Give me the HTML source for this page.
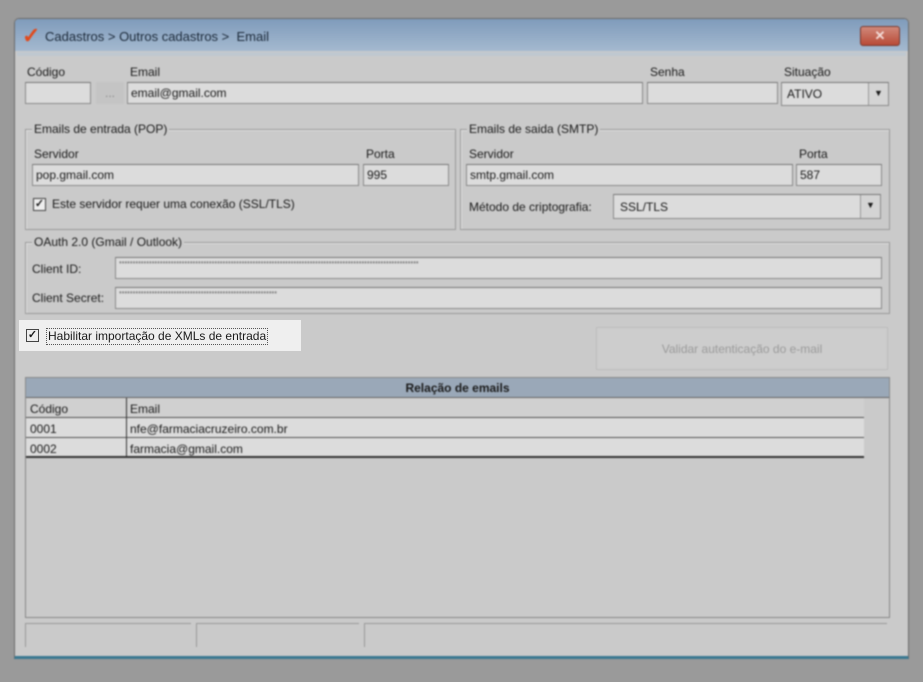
<!DOCTYPE html>
<html><head><meta charset="utf-8"><style>
*{box-sizing:border-box;margin:0;padding:0}
body{width:923px;height:682px;background:#9a9a9a;font-family:"Liberation Sans",sans-serif;font-size:12px;color:#1a1a1a;position:relative;overflow:hidden}
.a{position:absolute}
#bl{position:absolute;left:0;top:0;width:923px;height:682px;filter:blur(0.7px)}
.win{left:14px;top:18px;width:895px;height:641px;background:#cacaca;border:1px solid #6a6a6a;border-bottom:3px solid #3a7890;border-radius:5px 5px 0 0}
.tb{left:15px;top:19px;width:893px;height:32px;background:linear-gradient(#7f9bbb,#a4b9cf);border-radius:4px 4px 0 0}
.in{background:#dcdcdc;border:1px solid #8a8a8a;border-top-color:#777;padding:2px 3px;line-height:16px;font-size:12px}
.grp{border:1px solid #999;box-shadow:inset 1px 1px 0 #e0e0e0}
.gt{background:#cacaca;padding:0 2px;font-size:12px}
.cb{width:13px;height:13px;border:1px solid #444;background:#eee;font-size:11px;line-height:11px;text-align:center;font-weight:bold}
.dd{width:20px;background:#d4d4d4;border-left:1px solid #999;font-size:9px;text-align:center;line-height:20px}
</style></head><body>
<div id="bl">
<div class="a win"></div>
<div class="a tb"></div>
<div class="a" style="left:22px;top:25px;color:#e04a1c;font-size:22px;font-weight:bold;line-height:22px">✓</div>
<div class="a" style="left:45px;top:29px;font-size:13px;color:#1c2a3a">Cadastros &gt; Outros cadastros &gt;&nbsp; Email</div>
<div class="a" style="left:860px;top:26px;width:40px;height:20px;background:linear-gradient(#d0887a,#b84a36);border:1px solid #7a3a30;border-radius:3px;color:#f4dcd8;text-align:center;font-size:13px;line-height:18px;font-weight:bold">✕</div>
<div class="a" style="left:17px;top:52px;width:889px;height:4px;background:#bfc8d0"></div>

<div class="a" style="left:27px;top:65px">Código</div>
<div class="a" style="left:130px;top:65px">Email</div>
<div class="a" style="left:650px;top:65px">Senha</div>
<div class="a" style="left:784px;top:65px">Situação</div>
<div class="a in" style="left:25px;top:82px;width:66px;height:22px"></div>
<div class="a" style="left:96px;top:82px;width:28px;height:22px;background:#c4c4c4;color:#888;text-align:center;line-height:22px">...</div>
<div class="a in" style="left:127px;top:82px;width:516px;height:22px">email@gmail.com</div>
<div class="a in" style="left:647px;top:82px;width:131px;height:22px"></div>
<div class="a in" style="left:781px;top:82px;width:108px;height:24px;padding:0;display:flex"><span style="flex:1;padding:3px 5px">ATIVO</span><span class="dd">▼</span></div>

<div class="a grp" style="left:25px;top:129px;width:431px;height:101px"></div>
<div class="a gt" style="left:32px;top:122px">Emails de entrada (POP)</div>
<div class="a" style="left:34px;top:147px">Servidor</div>
<div class="a" style="left:366px;top:147px">Porta</div>
<div class="a in" style="left:32px;top:164px;width:327px;height:22px">pop.gmail.com</div>
<div class="a in" style="left:363px;top:164px;width:86px;height:22px">995</div>
<div class="a cb" style="left:33px;top:198px">✓</div>
<div class="a" style="left:52px;top:197px">Este servidor requer uma conexão (SSL/TLS)</div>

<div class="a grp" style="left:460px;top:129px;width:430px;height:101px"></div>
<div class="a gt" style="left:467px;top:122px">Emails de saida (SMTP)</div>
<div class="a" style="left:469px;top:147px">Servidor</div>
<div class="a" style="left:799px;top:147px">Porta</div>
<div class="a in" style="left:466px;top:164px;width:327px;height:22px">smtp.gmail.com</div>
<div class="a in" style="left:796px;top:164px;width:86px;height:22px">587</div>
<div class="a" style="left:469px;top:200px">Método de criptografia:</div>
<div class="a in" style="left:613px;top:194px;width:268px;height:25px;padding:0;display:flex"><span style="flex:1;padding:4px 6px">SSL/TLS</span><span class="dd">▼</span></div>

<div class="a grp" style="left:25px;top:242px;width:865px;height:72px"></div>
<div class="a gt" style="left:32px;top:235px">OAuth 2.0 (Gmail / Outlook)</div>
<div class="a" style="left:32px;top:262px">Client ID:</div>
<div class="a" style="left:32px;top:291px">Client Secret:</div>
<div class="a in" style="left:115px;top:257px;width:767px;height:22px;font-size:7px;line-height:10px;color:#555">**************************************************************************************************************</div>
<div class="a in" style="left:115px;top:287px;width:767px;height:22px;font-size:7px;line-height:10px;color:#555">**********************************************************</div>

<div class="a" style="left:596px;top:327px;width:292px;height:43px;background:#cdcdcd;border:1px solid #bcbcbc;color:#9a9a9a;text-align:center;line-height:43px">Validar autenticação do e-mail</div>

<div class="a" style="left:25px;top:377px;width:865px;height:241px;border:1px solid #888;background:#cacaca"></div>
<div class="a" style="left:26px;top:378px;width:863px;height:20px;background:#9aa8b8;text-align:center;font-weight:bold;line-height:20px;border-bottom:1px solid #666">Relação de emails</div>
<div class="a" style="left:26px;top:398px;width:838px;height:60px;border-right:2px solid #333"></div>
<div class="a" style="left:26px;top:398px;width:838px;height:20px;background:#d0d0d0;border-bottom:1px solid #555"></div>
<div class="a" style="left:26px;top:418px;width:838px;height:20px;background:#dcdcdc;border-bottom:1px solid #555"></div>
<div class="a" style="left:26px;top:438px;width:838px;height:20px;background:#dcdcdc;border-bottom:2px solid #333"></div>
<div class="a" style="left:126px;top:398px;width:1px;height:60px;background:#333"></div>
<div class="a" style="left:30px;top:402px">Código</div><div class="a" style="left:130px;top:402px">Email</div>
<div class="a" style="left:30px;top:422px">0001</div><div class="a" style="left:130px;top:422px">nfe@farmaciacruzeiro.com.br</div>
<div class="a" style="left:30px;top:442px">0002</div><div class="a" style="left:130px;top:442px">farmacia@gmail.com</div>

<div class="a" style="left:25px;top:623px;width:166px;height:24px;border-left:1px solid #999;border-top:1px solid #999"></div>
<div class="a" style="left:196px;top:623px;width:163px;height:24px;border-left:1px solid #999;border-top:1px solid #999"></div>
<div class="a" style="left:364px;top:623px;width:523px;height:24px;border-left:1px solid #999;border-top:1px solid #999"></div>
</div>
<div class="a" style="left:19px;top:320px;width:282px;height:31px;background:#efefef"></div>
<div class="a cb" style="left:26px;top:329px">✓</div>
<div class="a" style="left:46px;top:328px;border:1px dotted #555;padding:0 1px;line-height:15px">Habilitar importação de XMLs de entrada</div>
</body></html>
